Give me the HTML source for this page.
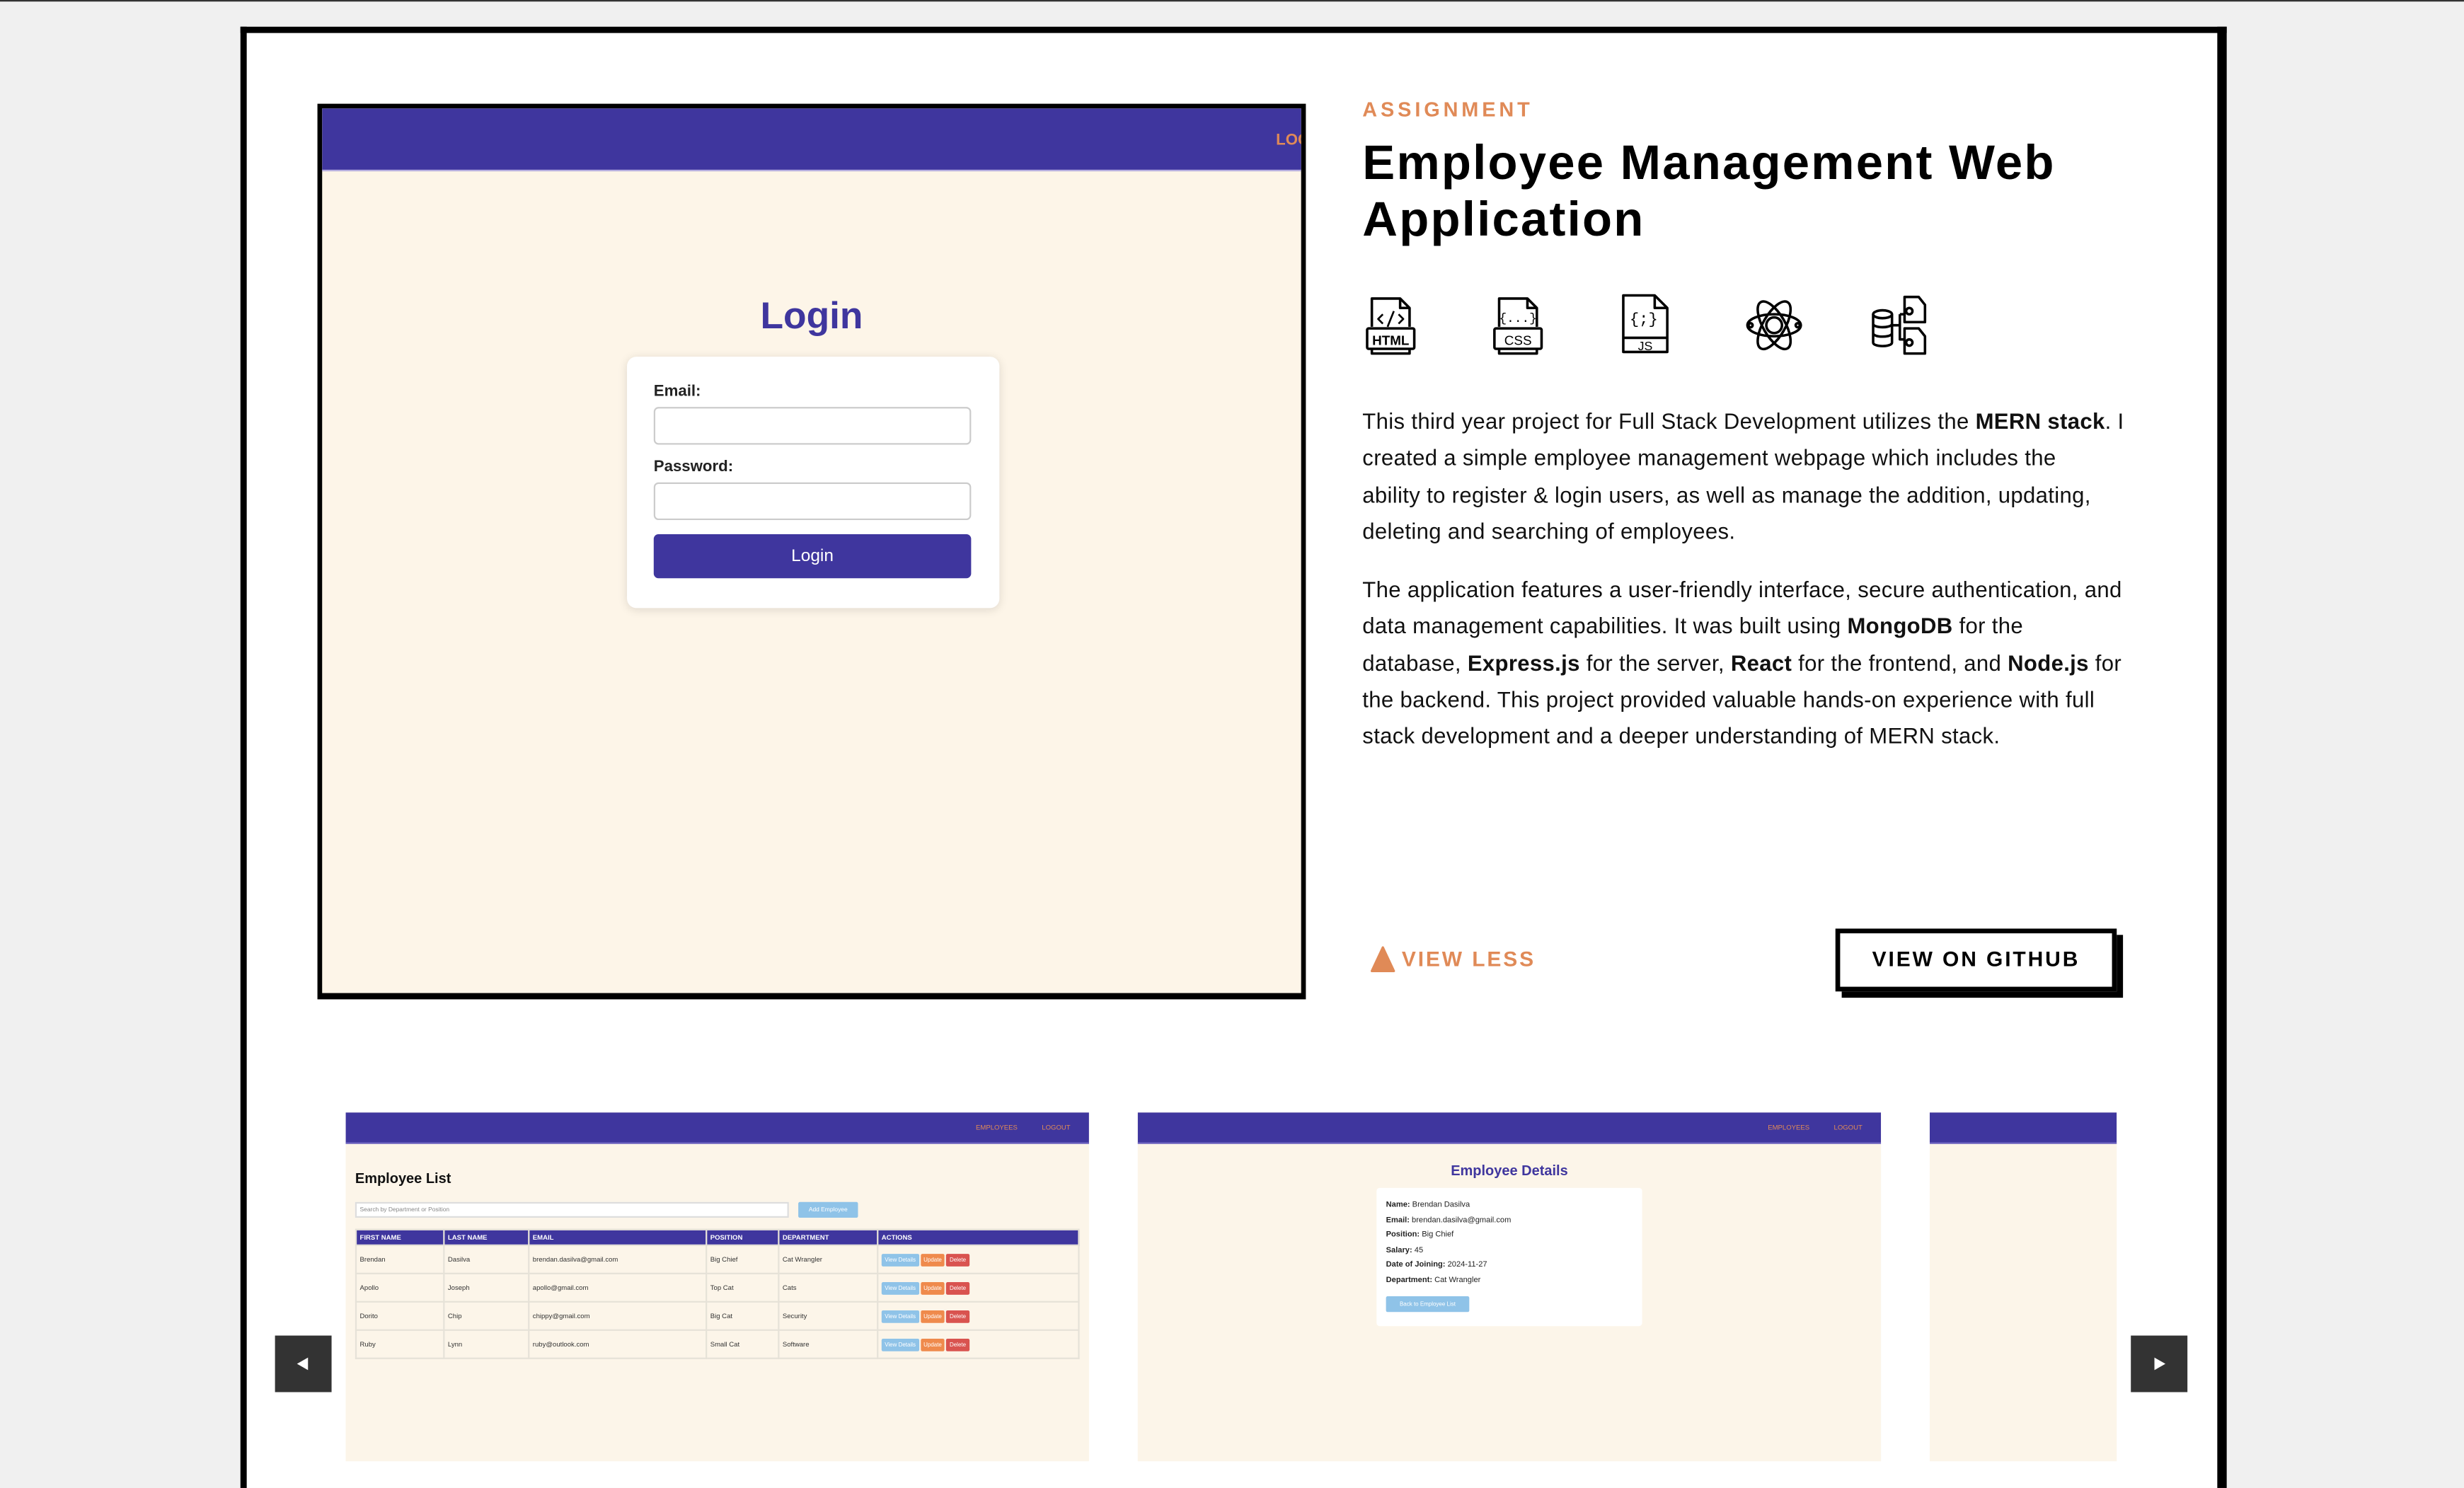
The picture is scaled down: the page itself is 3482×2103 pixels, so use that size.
<!DOCTYPE html>
<html><head><meta charset="utf-8">
<style>
*{margin:0;padding:0;box-sizing:border-box}
html,body{width:3482px;height:2066px;overflow:hidden;background:#f0f0f0}
#s{position:absolute;left:0;top:0;width:1568px;height:930px;transform:scale(2.22066);transform-origin:0 0;font-family:"Liberation Sans",Arial,sans-serif;background:#f0f0f0}
.a{position:absolute}
.outer{left:153px;top:17px;width:1264px;height:930px;background:#fff;border:4px solid #000;border-right-width:6px;border-bottom:none}
.frame{left:202px;top:66px;width:629px;height:570px;border:3px solid #000;border-bottom-width:4px;background:#fdf5e8;overflow:hidden}
.pur{background:#3f369e}
.org{color:#e08a57}
.p{font-size:14px;line-height:23.3px;color:#111;white-space:nowrap;letter-spacing:0.15px}
.p b{font-weight:bold}
.sl{background:#fcf5e9;overflow:hidden}
.sl .hd{position:absolute;left:0;top:0;right:0;height:20px;background:#3f369e;border-bottom:1px solid #6d63c0}
.nav{position:absolute;top:7px;font-size:4.3px;color:#e08a57}
table{border-collapse:collapse;font-size:4.3px;color:#333}
td,th{border:0.5px solid #e6e2d8;padding:0 2px;text-align:left;height:18px}
th{background:#3f369e;color:#fff;height:10px;font-weight:bold}
.bt{display:inline-block;height:8px;line-height:8px;padding:0 2px;color:#fff;font-size:3.6px;border-radius:1px;margin-right:1px}
.arr{width:36px;height:36px;background:#333}
</style></head><body><div id="s">
<div class="a" style="left:0;top:0;width:1568px;height:1px;background:#333"></div>
<div class="a outer"></div>

<div class="a frame">
 <div class="a pur" style="left:0;top:0;right:0;height:40px;border-bottom:1px solid #b8b0e0"></div>
 <div class="a org" style="left:607px;top:15px;font-size:10px;font-weight:bold">LOGOUT</div>
 <div class="a" style="left:0;width:623px;top:119px;text-align:center;font-size:24px;font-weight:bold;color:#3f369e">Login</div>
 <div class="a" style="left:194px;top:158px;width:237px;height:160px;background:#fff;border-radius:6px;box-shadow:0 1px 6px rgba(0,0,0,.12)">
  <div class="a" style="left:17px;top:17px;font-size:10px;font-weight:bold;color:#222">Email:</div>
  <div class="a" style="left:17px;top:32px;width:202px;height:24px;border:1px solid #ccc;border-radius:3px"></div>
  <div class="a" style="left:17px;top:65px;font-size:10px;font-weight:bold;color:#222">Password:</div>
  <div class="a" style="left:17px;top:80px;width:202px;height:24px;border:1px solid #ccc;border-radius:3px"></div>
  <div class="a pur" style="left:17px;top:113px;width:202px;height:28px;border-radius:3px;color:#fff;font-size:11px;text-align:center;line-height:28px">Login</div>
 </div>
</div>

<div class="a org" style="left:867px;top:62px;font-size:13px;font-weight:bold;letter-spacing:2.2px">ASSIGNMENT</div>
<div class="a" style="left:867px;top:86px;font-size:31px;line-height:36px;font-weight:900;color:#000;letter-spacing:1px">Employee Management Web<br>Application</div>

<svg class="a" style="left:866px;top:186px" width="370" height="42" viewBox="0 0 370 42" fill="none" stroke="#000" stroke-width="1.6" stroke-linejoin="round">
 <g transform="translate(4,2)">
  <path d="M3 20V2h18l6 6v12M3 34v3h24v-3"/><path d="M21 2v6h6"/>
  <rect x="0" y="21" width="30" height="13" rx="1"/>
  <path d="M10 12l-3 3 3 3M20 12l3 3-3 3M17 10l-4 10" stroke-width="1.2"/>
  <text x="15" y="31.5" font-size="8.5" font-family="Liberation Sans" font-weight="bold" text-anchor="middle" fill="#000" stroke="none">HTML</text>
 </g>
 <g transform="translate(85,2)">
  <path d="M3 20V2h18l6 6v12M3 34v3h24v-3"/><path d="M21 2v6h6"/>
  <rect x="0" y="21" width="30" height="13" rx="1"/>
  <text x="15" y="17" font-size="8" font-family="Liberation Mono" text-anchor="middle" fill="#000" stroke="none">{...}</text>
  <text x="15" y="31.5" font-size="8.5" font-family="Liberation Sans" text-anchor="middle" fill="#000" stroke="none">CSS</text>
 </g>
 <g transform="translate(167,2)">
  <path d="M0 36V0h20l8 8v28z"/><path d="M20 0v8h8M0 27h28"/>
  <text x="13" y="18" font-size="10" font-family="Liberation Mono" text-anchor="middle" fill="#000" stroke="none">{;}</text>
  <text x="14" y="35" font-size="8" font-family="Liberation Sans" text-anchor="middle" fill="#000" stroke="none">JS</text>
 </g>
 <g transform="translate(263,21)">
  <ellipse rx="17" ry="7"/><ellipse rx="17" ry="7" transform="rotate(60)"/><ellipse rx="17" ry="7" transform="rotate(-60)"/>
  <circle r="5"/><circle cx="-15" cy="0" r="1.3"/><circle cx="15" cy="0" r="1.3"/>
 </g>
 <g transform="translate(325,3)">
  <ellipse cx="7" cy="11" rx="6" ry="2.5"/><path d="M1 11v18c0 3 12 3 12 0V11M1 17c0 3 12 3 12 0M1 23c0 3 12 3 12 0"/>
  <path d="M13 18h5M18 11v16h3M18 11h3"/>
  <path d="M21 0h9l4 5v11H21zM21 20h9l4 5v11H21z"/><circle cx="24" cy="9" r="2"/><circle cx="24" cy="29" r="2"/>
 </g>
</svg>

<div class="a p" style="left:867px;top:257px">This third year project for Full Stack Development utilizes the <b>MERN stack</b>. I<br>created a simple employee management webpage which includes the<br>ability to register &amp; login users, as well as manage the addition, updating,<br>deleting and searching of employees.</div>
<div class="a p" style="left:867px;top:364px">The application features a user-friendly interface, secure authentication, and<br>data management capabilities. It was built using <b>MongoDB</b> for the<br>database, <b>Express.js</b> for the server, <b>React</b> for the frontend, and <b>Node.js</b> for<br>the backend. This project provided valuable hands-on experience with full<br>stack development and a deeper understanding of MERN stack.</div>

<svg class="a" style="left:872px;top:602px" width="16" height="17"><path d="M8 1L15 16H1z" fill="#e08a57" stroke="#e08a57" stroke-linejoin="round" stroke-width="1.5"/></svg>
<div class="a org" style="left:892px;top:603px;font-size:13.5px;font-weight:bold;letter-spacing:1.3px">VIEW LESS</div>
<div class="a" style="left:1172px;top:595px;width:179px;height:40px;background:#000"></div>
<div class="a" style="left:1168px;top:591px;width:179px;height:40px;background:#fff;border:3px solid #000;text-align:center;line-height:34px;font-size:13.5px;font-weight:bold;letter-spacing:1.3px;color:#000">VIEW ON GITHUB</div>

<div class="a sl" style="left:220px;top:708px;width:473px;height:222px">
 <div class="hd"></div>
 <div class="nav" style="left:401px">EMPLOYEES</div><div class="nav" style="left:443px">LOGOUT</div>
 <div class="a" style="left:6px;top:37px;font-size:9px;font-weight:bold;color:#111">Employee List</div>
 <div class="a" style="left:6px;top:57px;width:276px;height:10px;background:#fff;border:0.5px solid #ddd;font-size:3.8px;color:#888;line-height:9px;padding-left:2px">Search by Department or Position</div>
 <div class="a" style="left:288px;top:57px;width:38px;height:10px;background:#8fc3e8;font-size:3.8px;color:#fff;line-height:10px;text-align:center;border-radius:1px">Add Employee</div>
 <table class="a" style="left:6px;top:74px;width:461px">
  <tr><th style="width:56px">FIRST NAME</th><th style="width:54px">LAST NAME</th><th style="width:113px">EMAIL</th><th style="width:46px">POSITION</th><th style="width:63px">DEPARTMENT</th><th>ACTIONS</th></tr>
  <tr><td>Brendan</td><td>Dasilva</td><td>brendan.dasilva@gmail.com</td><td>Big Chief</td><td>Cat Wrangler</td><td><span class="bt" style="background:#8fc3e8">View Details</span><span class="bt" style="background:#ef8a4c">Update</span><span class="bt" style="background:#d9534f">Delete</span></td></tr>
  <tr><td>Apollo</td><td>Joseph</td><td>apollo@gmail.com</td><td>Top Cat</td><td>Cats</td><td><span class="bt" style="background:#8fc3e8">View Details</span><span class="bt" style="background:#ef8a4c">Update</span><span class="bt" style="background:#d9534f">Delete</span></td></tr>
  <tr><td>Dorito</td><td>Chip</td><td>chippy@gmail.com</td><td>Big Cat</td><td>Security</td><td><span class="bt" style="background:#8fc3e8">View Details</span><span class="bt" style="background:#ef8a4c">Update</span><span class="bt" style="background:#d9534f">Delete</span></td></tr>
  <tr><td>Ruby</td><td>Lynn</td><td>ruby@outlook.com</td><td>Small Cat</td><td>Software</td><td><span class="bt" style="background:#8fc3e8">View Details</span><span class="bt" style="background:#ef8a4c">Update</span><span class="bt" style="background:#d9534f">Delete</span></td></tr>
 </table>
</div>

<div class="a sl" style="left:724px;top:708px;width:473px;height:222px">
 <div class="hd"></div>
 <div class="nav" style="left:401px">EMPLOYEES</div><div class="nav" style="left:443px">LOGOUT</div>
 <div class="a" style="left:0;width:473px;top:32px;text-align:center;font-size:9px;font-weight:bold;color:#3f369e">Employee Details</div>
 <div class="a" style="left:152px;top:48px;width:169px;height:88px;background:#fff;border-radius:2px;font-size:5px;line-height:9.6px;color:#222;padding:7px 6px">
  <b>Name:</b> Brendan Dasilva<br><b>Email:</b> brendan.dasilva@gmail.com<br><b>Position:</b> Big Chief<br><b>Salary:</b> 45<br><b>Date of Joining:</b> 2024-11-27<br><b>Department:</b> Cat Wrangler
  <div style="margin-top:4px;width:53px;height:10px;background:#8fc3e8;color:#fff;font-size:3.6px;line-height:10px;text-align:center;border-radius:1px">Back to Employee List</div>
 </div>
</div>

<div class="a sl" style="left:1228px;top:708px;width:119px;height:222px"><div class="hd"></div></div>

<div class="a arr" style="left:175px;top:850px"><svg width="36" height="36"><path d="M14 18l7-4v8z" fill="#fff"/></svg></div>
<div class="a arr" style="left:1356px;top:850px"><svg width="36" height="36"><path d="M22 18l-7-4v8z" fill="#fff"/></svg></div>
</div></body></html>
